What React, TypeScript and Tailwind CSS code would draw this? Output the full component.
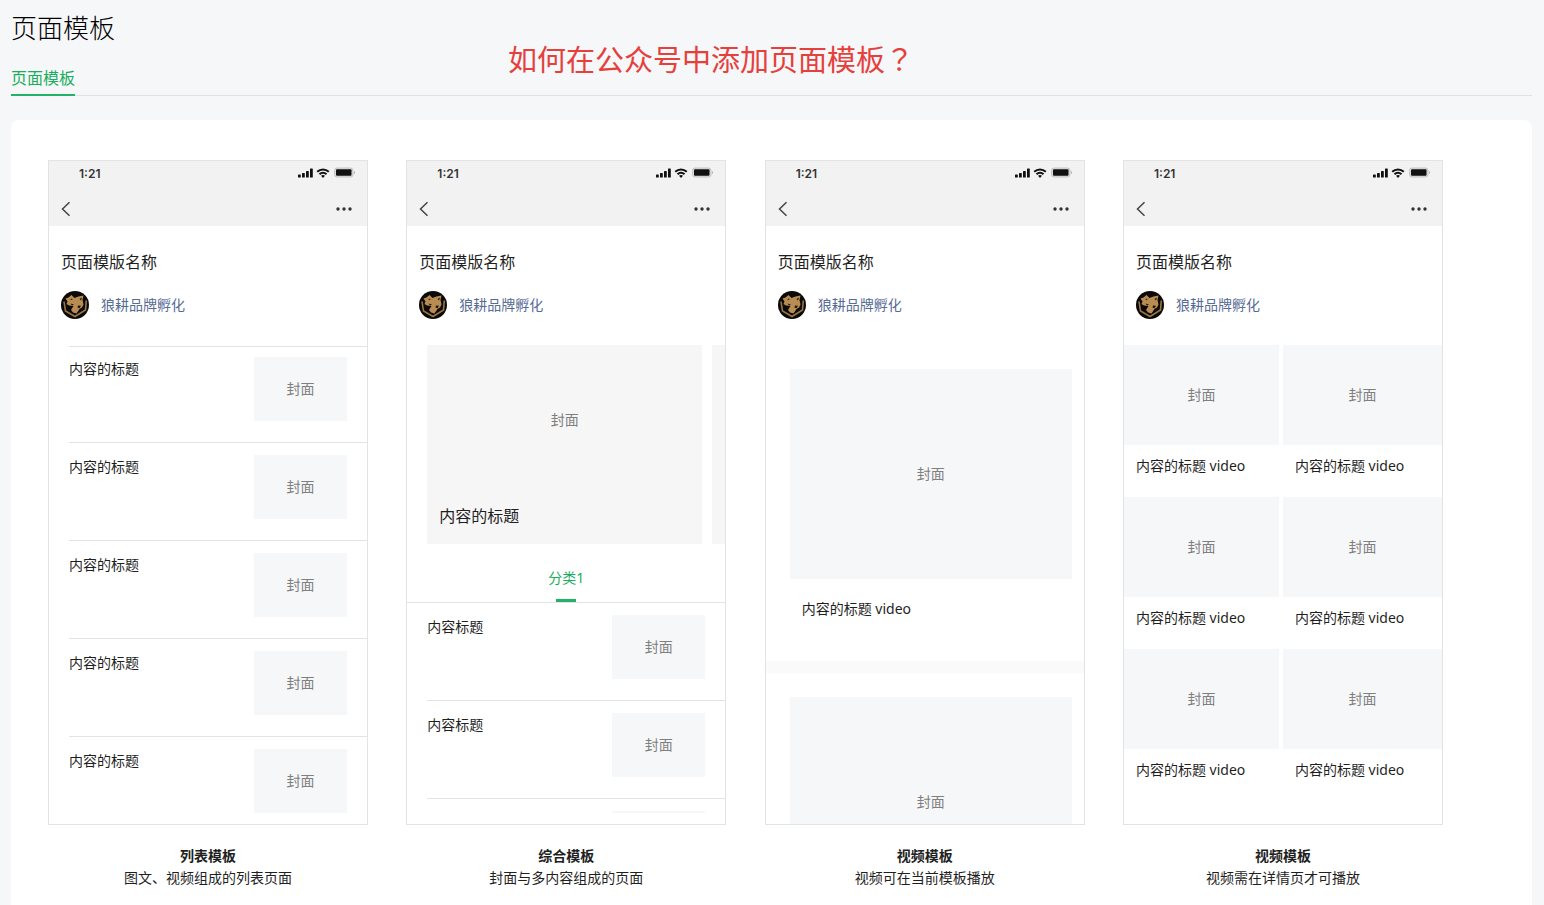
import type { ReactNode } from 'react'

interface Template {
  name: string
  desc: string
  preview: ReactNode
}

function StatusIcons() {
  return (
    <svg width="58" height="12" viewBox="0 0 58 12" fill="#111" aria-hidden="true">
      <rect x="1" y="7.5" width="2.8" height="3" rx="0.6" />
      <rect x="5" y="6" width="2.8" height="4.5" rx="0.6" />
      <rect x="9" y="4" width="2.8" height="6.5" rx="0.6" />
      <rect x="13" y="1.5" width="2.8" height="9" rx="0.6" />
      <g fill="none" stroke="#111" strokeWidth="2">
        <path d="M20.2 4.7a8.6 8.6 0 0 1 11.6 0" />
        <path d="M22.5 7.2a5.2 5.2 0 0 1 7 0" />
      </g>
      <path d="M26 11l-2-2.2a3 3 0 0 1 4 0z" />
      <rect x="37.5" y="1" width="18.5" height="9" rx="2.5" fill="#dcdcdc" stroke="#c4c4c4" />
      <rect x="39" y="2.2" width="15.5" height="6.6" rx="1" />
      <path d="M57 4v3c.8-.3 1-.8 1-1.5s-.2-1.2-1-1.5z" fill="#b5b5b5" />
    </svg>
  )
}

function Avatar() {
  return (
    <svg width="28" height="28" viewBox="0 0 28 28" aria-hidden="true">
      <circle cx="14" cy="14" r="14" fill="#0b0a09" />
      <path d="M3 10.5l1.5 9.5 9.5 5.5 10.5-6.5.8-9.5" fill="none" stroke="#9a7543" strokeWidth="1.6" />
      <path
        d="M4.5 7.5l3-1 3-2.5 3 3 4-1.5L22.500 4.500l-1 4.500 1 4.500-1.500 3-2.500 1.500-3 4.500-3.500-1-2-2.500 2.500-4-4.500-.5L5.500 13l1-2.500z"
        fill="#b98d52"
      />
      <path d="M9 8.5l2-1 .5 1.5zM18.5 8l2.500-1.500-1 3zM9.500 12.500l3.500 1-2 1zM17 14.500l3 .3-1.500 2.500-2-.8z" fill="#1d160d" />
    </svg>
  )
}

function Cover({ className }: { className: string }) {
  return (
    <div className={`flex shrink-0 items-center justify-center text-sm text-[#7f7f7f] ${className}`}>封面</div>
  )
}

function ContentRow({ title }: { title: string }) {
  return (
    <li className="flex justify-between border-t border-[#e1e3e5] pt-3 pr-5 pb-[21px] first:pt-[10px]">
      <span className="text-sm leading-6">{title}</span>
      <Cover className="h-16 w-[93px] bg-[#f6f7f9]" />
    </li>
  )
}

function Phone({ children }: { children: ReactNode }) {
  return (
    <div className="flex h-[665px] flex-col overflow-hidden border border-[#e1e3e5] bg-white">
      <div className="h-[65px] shrink-0 bg-[#f2f2f2]">
        <div className="flex h-6 items-center justify-between pr-3 pl-[30px]">
          <span className="pt-0.5 font-['Inter'] text-xs font-semibold text-[#333]">1:21</span>
          <StatusIcons />
        </div>
        <div className="flex h-12 items-center justify-between px-3">
          <button type="button" aria-label="返回">
            <svg width="10" height="16" viewBox="0 0 10 16" fill="none" stroke="#444" strokeWidth="1.5">
              <path d="M8.5 1.2L1.5 8l7 6.8" />
            </svg>
          </button>
          <button type="button" aria-label="更多">
            <svg width="22" height="4" viewBox="0 0 22 4" fill="#333">
              <circle cx="5" cy="2" r="1.7" />
              <circle cx="11" cy="2" r="1.7" />
              <circle cx="17" cy="2" r="1.7" />
            </svg>
          </button>
        </div>
      </div>

      <div className="shrink-0 px-3 pt-6 pb-[26px]">
        <h3 className="leading-6">页面模版名称</h3>
        <div className="mt-[17px] flex items-center gap-3">
          <Avatar />
          <span className="text-sm text-[#576b95]">狼耕品牌孵化</span>
        </div>
      </div>

      {children}
    </div>
  )
}

function ListPreview() {
  return (
    <ul className="mt-px ml-5">
      {[1, 2, 3, 4, 5].map((n) => (
        <ContentRow key={n} title="内容的标题" />
      ))}
    </ul>
  )
}

function MixedPreview() {
  return (
    <>
      <div className="flex shrink-0 gap-[10px] pl-5">
        <div className="h-[199px] w-[275px] shrink-0 bg-[#f6f6f6]">
          <Cover className="h-[150px]" />
          <p className="px-3 leading-[42px]">内容的标题</p>
        </div>
        <div className="h-[199px] w-[275px] shrink-0 bg-[#f6f6f6]" />
      </div>
      <div className="flex h-[58px] shrink-0 justify-center">
        <button type="button" className="flex flex-col items-center justify-between pt-[22px] text-sm leading-6 text-[#1aad5e]">
          分类1
          <span className="h-[3px] w-5 bg-[#22b366]" />
        </button>
      </div>
      <div className="border-t border-[#e1e3e5] pt-0.5">
        <ul className="ml-5">
          <li className="flex justify-between pt-[10px] pr-5 pb-[21px]">
            <span className="text-sm leading-6">内容标题</span>
            <Cover className="h-16 w-[93px] bg-[#f6f7f9]" />
          </li>
          <ContentRow title="内容标题" />
          {/* 下一行只露出封面顶部 */}
          <li className="flex justify-end border-t border-[#e1e3e5] pt-3 pr-5">
            <div className="h-0.5 w-[93px] bg-[#f6f7f9]" />
          </li>
        </ul>
      </div>
    </>
  )
}

function VideoPreview() {
  return (
    <>
      <div className="shrink-0 border-b-[12px] border-[#fafafa] pt-6 pr-3 pb-10 pl-6">
        <Cover className="h-[210px] bg-[#f6f7f9]" />
        <p className="px-3 pt-[18px] text-sm leading-6">内容的标题 video</p>
      </div>
      <div className="shrink-0 pt-6 pr-3 pl-6">
        <Cover className="h-[210px] bg-[#f6f7f9]" />
      </div>
    </>
  )
}

function VideoGridPreview() {
  return (
    <div className="grid grid-cols-[155px_1fr] gap-x-1">
      {[1, 2, 3, 4, 5, 6].map((n) => (
        <div key={n} className="pb-[19px]">
          <Cover className="h-[100px] bg-[#f6f7f9]" />
          <p className="px-3 pt-[9px] text-sm leading-6">内容的标题 video</p>
        </div>
      ))}
    </div>
  )
}

const templates: Template[] = [
  { name: '列表模板', desc: '图文、视频组成的列表页面', preview: <ListPreview /> },
  { name: '综合模板', desc: '封面与多内容组成的页面', preview: <MixedPreview /> },
  { name: '视频模板', desc: '视频可在当前模板播放', preview: <VideoPreview /> },
  { name: '视频模板', desc: '视频需在详情页才可播放', preview: <VideoGridPreview /> },
]

export default function App() {
  return (
    <div className="flex min-h-screen flex-col bg-[#f6f7f9] pr-3 pl-[11px] font-['Noto_Sans','Noto_Sans_CJK_SC',sans-serif] text-[#1f1f1f]">
      <header className="flex h-24 shrink-0 border-b border-[#dfe2e4]">
        <div className="w-[497px] shrink-0 pt-2">
          <h1 className="text-[26px] leading-10 font-light text-black">页面模板</h1>
          <nav className="mt-4">
            <a href="#templates" className="inline-block h-8 border-b-2 border-[#22b366] leading-[28px] text-[#1aad5e]">
              页面模板
            </a>
          </nav>
        </div>
        <h2 className="pt-[38px] text-[29px] leading-10 text-[#e5403c]">
          如何在公众号中添加页面模板
          <span className="font-['Noto_Sans_CJK_TC',sans-serif]" lang="zh-TW">？</span>
        </h2>
      </header>

      {/* 模板列表 */}
      <main id="templates" className="mt-6 grow rounded-t-lg bg-white pt-10 pr-[89px] pl-[37px]">
        <div className="flex justify-between">
          {templates.map((item) => (
            <section key={item.desc} className="w-80 shrink-0">
              <Phone>{item.preview}</Phone>
              <div className="pt-5 text-center text-sm leading-[22px]">
                <h4 className="font-bold">{item.name}</h4>
                <p>{item.desc}</p>
              </div>
            </section>
          ))}
        </div>
      </main>
    </div>
  )
}
